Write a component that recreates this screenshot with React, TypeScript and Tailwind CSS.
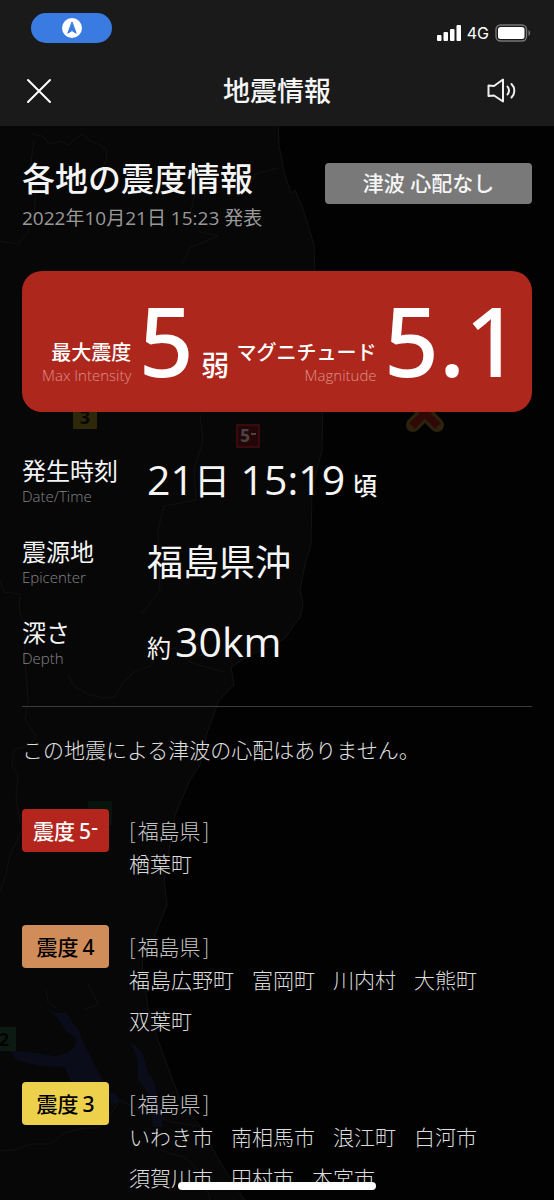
import React from "react";

interface AreaGroup {
  level: string;
  suffix?: string;
  badgeClass: string;
  prefecture: string;
  cities: string[];
}

const GROUPS: AreaGroup[] = [
  {
    level: "5",
    suffix: "-",
    badgeClass: "bg-[#b4261d] text-white",
    prefecture: "福島県",
    cities: ["楢葉町"],
  },
  {
    level: "4",
    badgeClass: "bg-[#d18d59] text-black",
    prefecture: "福島県",
    cities: ["福島広野町", "富岡町", "川内村", "大熊町", "双葉町"],
  },
  {
    level: "3",
    badgeClass: "bg-[#edd04c] text-black",
    prefecture: "福島県",
    cities: ["いわき市", "南相馬市", "浪江町", "白河市", "須賀川市", "田村市", "本宮市"],
  },
];

// dimmed map that shows through behind the details
const MapBackdrop = () => (
  <svg
    className="absolute inset-0 h-full w-full"
    viewBox="0 0 554 1200"
    preserveAspectRatio="xMinYMin slice"
    aria-hidden="true"
  >
    <path
      d="M-4 120H278L279 145L284 172L291 193L295 190L302 206L308 225L314 245L315 275L323 400L322 450L312 490L311 545L306 560L300 590L303 605L300 618L294 625L286 637L278 643L250 655L231 667L234 685L219 700L207 733L200 765L190 780L175 815L171 840L164 880L167 905L160 922L153 940L142 955L143 975L148 1007L158 1040L170 1073L182 1105L198 1123L222 1165L247 1204H-4Z"
      fill="#070707"
      stroke="#131313"
    />
    <g fill="none" stroke="#111">
      <path d="M32 134L42 136L50 144L60 141L68 145L76 138L83 134L90 141L100 145L107 150L106 160L98 180L108 190" />
      <path d="M34 140L30 170L36 190L34 215L28 232L18 244L0 241" />
      <path d="M196 190L190 215L200 232L218 236L190 248L182 264" />
      <path d="M278 168L255 174L248 190" />
      <path d="M0 580L4 592L20 594L19 610L24 625L25 660L28 700L25 720L36 736L30 745L14 750L12 765L18 776L16 800L22 830L10 855L5 878L0 892" />
      <path d="M68 675L74 686L90 695L104 698L114 697L122 684L134 672L152 665L156 652L175 648L190 662L206 667L224 672" />
      <path d="M200 414L203 440L194 470L196 500L164 506L158 530L160 590L142 614" />
      <path d="M0 1151L15 1150L30 1144L50 1144L64 1133L84 1128L98 1128L112 1112L120 1100L138 1110L172 1122L198 1126" />
      <path d="M160 1150L186 1158L203 1175L210 1200" />
      <path d="M46 990L48 1002L56 1008M88 984L98 1004L84 1010" />
    </g>
    <g fill="#0a0c1a">
      <path d="M46 1008L56 1013L66 1012L72 1022L79 1030L82 1040L86 1048L94 1064L105 1084H72L65 1067L40 1066L16 1060L10 1050L30 1052L55 1056L68 1053L75 1046L76 1038L66 1031L58 1019Z" />
      <path d="M130 1042L136 1046L143 1054L147 1070L155 1084L158 1100L162 1112V1127H153L150 1097L138 1078L137 1058Z" />
      <path d="M108 1092L117 1094L119 1102L112 1106Z" />
    </g>
    <g fontFamily="Open Sans, sans-serif" fontWeight="700" textAnchor="middle">
      <rect x="73" y="405" width="24" height="24" rx="1" fill="#2c2809" />
      <text x="85" y="424" fontSize="18" fill="#060604">3</text>
      <rect x="237" y="425" width="22" height="22" fill="#240508" stroke="#370b0f" strokeWidth="2" />
      <text x="245" y="442" fontSize="17" fill="#4a4544">5</text>
      <path d="M251 434H256" stroke="#4a4544" strokeWidth="2" />
      <rect x="88" y="801" width="24" height="24" rx="1" fill="#07130d" />
      <rect x="-8" y="1027" width="24" height="24" rx="1" fill="#0d1a14" />
      <text x="4" y="1046" fontSize="18" fill="#020202">2</text>
    </g>
    <g fill="none">
      <path d="M413 425L437 401M413 401L437 425" stroke="#2c220d" strokeWidth="14" strokeLinecap="round" />
      <path d="M412 426L437 401M413 401L438 426" stroke="#300907" strokeWidth="8" />
    </g>
  </svg>
);

const StatusBar = () => (
  <div className="flex items-start justify-between pt-[13px] pr-[23px] pl-[31px]">
    <div className="flex h-[30px] w-[81px] items-center justify-center rounded-full bg-[#3a7be2]">
      <svg className="h-5 w-5" viewBox="0 0 20 20" aria-hidden="true">
        <circle cx="10" cy="10" r="10" fill="#fff" />
        <path d="M10 4L14.2 15.2L10 12.6L5.8 15.2Z" fill="#3a7be2" stroke="#3a7be2" strokeLinejoin="round" />
      </svg>
    </div>
    <div className="flex items-center gap-1.5 pt-2.5">
      <svg className="h-4 w-6" viewBox="0 0 24 16" fill="#fff" aria-hidden="true">
        <rect x="0" y="10" width="4.5" height="6" rx="1" />
        <rect x="6.5" y="7" width="4.5" height="9" rx="1" />
        <rect x="13" y="4" width="4.5" height="12" rx="1" />
        <rect x="19.5" y="0" width="4.5" height="16" rx="1" />
      </svg>
      <span className="font-[Inter,sans-serif] text-base leading-5 text-white">4G</span>
      <svg className="h-[18px] w-9" viewBox="0 0 36 18" aria-hidden="true">
        <rect x="1" y="1" width="30.5" height="16" rx="4.5" fill="none" stroke="#777" strokeWidth="1.4" />
        <rect x="3" y="3" width="26.5" height="12" rx="2.5" fill="#fff" />
        <path d="M33.5 6C35.6 7 35.6 11 33.5 12Z" fill="#777" />
      </svg>
    </div>
  </div>
);

const Header = () => (
  <header className="relative h-[126px] bg-[#1a1a1a]">
    <StatusBar />
    <div className="grid grid-cols-[1fr_auto_1fr] items-center px-[26px] pt-7">
      <button type="button" aria-label="閉じる" className="justify-self-start">
        <svg className="h-[26px] w-[26px]" viewBox="0 0 26 26" fill="none" stroke="#fff" strokeWidth="2" strokeLinecap="round" aria-hidden="true">
          <path d="M2 2L24 24M24 2L2 24" />
        </svg>
      </button>
      <h1 className="text-[27px] leading-10 font-medium">地震情報</h1>
      <button type="button" aria-label="音声" className="justify-self-end pr-3">
        <svg className="h-[26px] w-[29px]" viewBox="0 0 29 26" fill="none" stroke="#eee" strokeWidth="2" strokeLinecap="round" strokeLinejoin="round" aria-hidden="true">
          <path d="M1.5 7.5L7 8L16 1.5V23.5L7 17.5L1.5 18Z" />
          <path d="M20.5 8.5C22.4 11 22.4 14 20.5 16.5M24.5 6C28.3 9.8 28.3 15.5 24.5 19.5" />
        </svg>
      </button>
    </div>
  </header>
);

const FigureLabel = ({ ja, en }: { ja: string; en: string }) => (
  <div className="pb-[27px] text-right whitespace-nowrap">
    <div className="text-[20px] leading-6 font-medium">{ja}</div>
    <div className="text-[15px] leading-5 font-light text-[#dd9089]">{en}</div>
  </div>
);

const BigFigure = ({ children }: { children: React.ReactNode }) => (
  <div className="pb-6 font-['Noto_Sans',sans-serif] text-[96px] leading-none font-medium">{children}</div>
);

const DetailRow = ({ ja, en, children }: { ja: string; en: string; children: React.ReactNode }) => (
  <div className="flex h-[81px]">
    <dt className="w-[125px] shrink-0">
      <div className="text-[24px] leading-7">{ja}</div>
      <div className="text-[15px] leading-[22px] font-light text-[#858585]">{en}</div>
    </dt>
    <dd className="text-[41px] leading-[44px]">{children}</dd>
  </div>
);

export default function App() {
  return (
    <div className="relative min-h-screen overflow-hidden bg-[#020202] font-['Open_Sans','Noto_Sans_CJK_JP',sans-serif] text-[#f5f5f5]">
      <MapBackdrop />
      <Header />

      <main className="relative px-[22px] pt-8">
        <div className="flex items-start justify-between">
          <div>
            <h2 className="text-[33px] leading-[42px] font-medium">各地の震度情報</h2>
            <p className="pt-1.5 text-[19px] leading-6 text-[#999]">2022年10月21日 15:23 発表</p>
          </div>
          <div className="mt-[5px] w-[207px] rounded bg-[#797979] text-center text-[21px] leading-[41px] font-medium">
            津波 心配なし
          </div>
        </div>

        <div className="mt-[41px] flex h-[141px] items-end justify-between rounded-[20px] bg-[#ad271d] pr-3 pl-5 text-white">
          <FigureLabel ja="最大震度" en="Max Intensity" />
          <BigFigure>5</BigFigure>
          <div className="pb-[29px] text-[28px] leading-9 font-medium">弱</div>
          <FigureLabel ja="マグニチュード" en="Magnitude" />
          <BigFigure>5.1</BigFigure>
        </div>

        <dl className="border-b border-[#3c3c3c] pt-[45px] pb-1.5">
          <DetailRow ja="発生時刻" en="Date/Time">
            21<span className="text-[36px]">日</span> 15:19
            <span className="ml-2 text-[24px] font-medium">頃</span>
          </DetailRow>
          <DetailRow ja="震源地" en="Epicenter">
            <span className="text-[36px]">福島県沖</span>
          </DetailRow>
          <DetailRow ja="深さ" en="Depth">
            <span className="mr-1 text-[24px]">約</span>
            30km
          </DetailRow>
        </dl>

        <p className="pt-[27px] pb-[43px] text-[21px] leading-8 font-light text-[#e0e0e0]">
          この地震による津波の心配はありません。
        </p>

        {GROUPS.map((g) => (
          <section key={g.level} className="mb-10 flex items-start gap-5 last:mb-0">
            <h3
              className={`flex h-[43px] w-[87px] shrink-0 items-center justify-center gap-1 rounded text-[21px] leading-6 font-medium ${g.badgeClass}`}
            >
              <span>震度</span>
              <span className="flex font-['Noto_Sans',sans-serif]">
                {g.level}
                {g.suffix && <span className="pb-1 leading-4">{g.suffix}</span>}
              </span>
            </h3>
            <div className="pt-2 text-[21px] font-light text-[#dcdcdc]">
              <div className="font-['Noto_Sans_CJK_JP',sans-serif] leading-[27px] text-[#c4c4c4]">
                [<span className="mx-0.5">{g.prefecture}</span>]
              </div>
              <ul className="flex flex-wrap gap-x-[18px] leading-[41px]">
                {g.cities.map((city) => (
                  <li key={city}>{city}</li>
                ))}
              </ul>
            </div>
          </section>
        ))}
      </main>

      <div className="fixed bottom-2.5 left-1/2 h-2 w-[198px] -translate-x-1/2 rounded-full bg-white" />
    </div>
  );
}
